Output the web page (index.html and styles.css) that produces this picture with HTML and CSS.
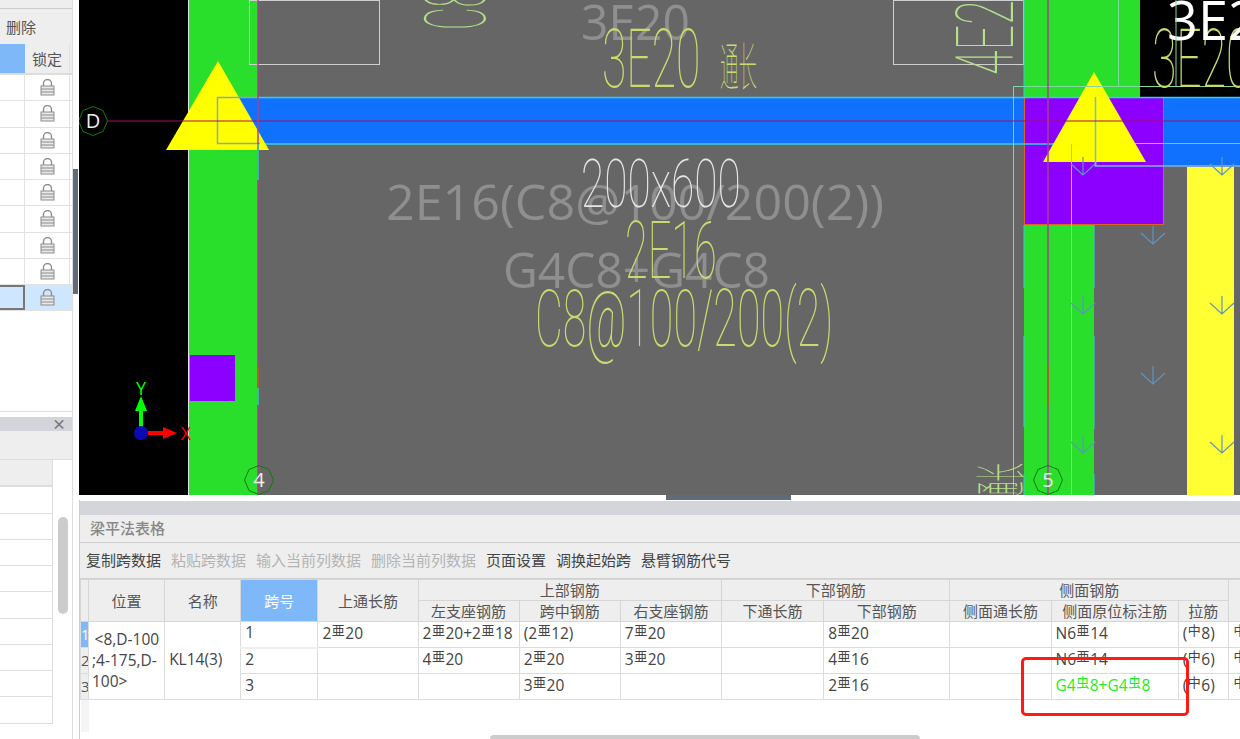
FILE: index.html
```html
<!DOCTYPE html>
<html lang="zh-CN">
<head>
    <meta charset="UTF-8">
    <meta name="viewport" content="width=device-width, initial-scale=1.0">
    <title>梁平法表格</title>
    <link rel="stylesheet" href="styles.css">
</head>
<body>
    <svg width="0" height="0" class="defs">
        <defs>
            <g id="lock">
                <path d="M3.5 7V4.500a4 4 0 0 1 8 0V7" fill="none" stroke="#8c8c8c" stroke-width="1.4"/>
                <rect x="1" y="7" width="13" height="9" fill="#e8e8e8" stroke="#8c8c8c"/>
                <path d="M1 10h13M1 13h13" stroke="#8c8c8c"/>
            </g>
            <path id="chev" d="M0 0V17M-12 7L0 18L12 7" fill="none" stroke="#5f95bd" stroke-width="1.2"/>
        </defs>
    </svg>

    <div class="page">
        <!-- Left side: layer list and lower panel -->
        <aside class="side">
            <div class="side-top"></div>
            <div class="side-tools">删除</div>
            <div class="lock-row lock-head"><span class="cell-a"></span><span class="cell-b">锁定</span><span class="cell-c"></span></div>
            <div class="lock-row"><span class="cell-a"></span><span class="cell-b"><svg width="15" height="17"><use href="#lock"/></svg></span><span class="cell-c"></span></div>
            <div class="lock-row"><span class="cell-a"></span><span class="cell-b"><svg width="15" height="17"><use href="#lock"/></svg></span><span class="cell-c"></span></div>
            <div class="lock-row"><span class="cell-a"></span><span class="cell-b"><svg width="15" height="17"><use href="#lock"/></svg></span><span class="cell-c"></span></div>
            <div class="lock-row"><span class="cell-a"></span><span class="cell-b"><svg width="15" height="17"><use href="#lock"/></svg></span><span class="cell-c"></span></div>
            <div class="lock-row"><span class="cell-a"></span><span class="cell-b"><svg width="15" height="17"><use href="#lock"/></svg></span><span class="cell-c"></span></div>
            <div class="lock-row"><span class="cell-a"></span><span class="cell-b"><svg width="15" height="17"><use href="#lock"/></svg></span><span class="cell-c"></span></div>
            <div class="lock-row"><span class="cell-a"></span><span class="cell-b"><svg width="15" height="17"><use href="#lock"/></svg></span><span class="cell-c"></span></div>
            <div class="lock-row"><span class="cell-a"></span><span class="cell-b"><svg width="15" height="17"><use href="#lock"/></svg></span><span class="cell-c"></span></div>
            <div class="lock-row selected"><span class="cell-a"></span><span class="cell-b"><svg width="15" height="17"><use href="#lock"/></svg></span><span class="cell-c"></span></div>
            <div class="side-fill"></div>

            <div class="side-panel">
                <div class="panel-title">×</div>
                <div class="panel-strip"></div>
                <div class="list">
                    <div class="list-head"></div>
                    <div class="list-row"></div>
                    <div class="list-row"></div>
                    <div class="list-row"></div>
                    <div class="list-row"></div>
                    <div class="list-row"></div>
                    <div class="list-row"></div>
                    <div class="list-row"></div>
                    <div class="list-row"></div>
                    <div class="list-row"></div>
                    <div class="list-thumb"></div>
                </div>
            </div>
        </aside>

        <div class="splitter-v"><span class="grip-v"></span></div>

        <main class="main">
            <!-- CAD view, coordinates are page pixels -->
            <svg class="cad" width="1161" height="495" viewBox="79 0 1161 495">
                <rect x="79" y="0" width="1161" height="495" fill="#000"/>
                <rect x="258" y="0" width="982" height="495" fill="#666"/>
                <rect x="1140" y="0" width="100" height="97" fill="#000"/>
                <rect x="189" y="0" width="69" height="495" fill="#2ade2c"/>
                <rect x="1024" y="0" width="116" height="97" fill="#2ade2c"/>
                <rect x="1024" y="225" width="70" height="270" fill="#2ade2c"/>
                <rect x="1187" y="167" width="47" height="328" fill="#ffff33"/>
                <rect x="190" y="355" width="45" height="46" fill="#8b00ff"/>
                <path d="M188.500 0V495" stroke="#e6e6e6"/>

                <!-- faded labels -->
                <text class="label" x="581" y="40" textLength="109" lengthAdjust="spacingAndGlyphs">3E20</text>
                <text class="label" x="386" y="220" textLength="498" lengthAdjust="spacingAndGlyphs">2E16(C8@100/200(2))</text>
                <text class="label" x="503" y="288" textLength="267" lengthAdjust="spacingAndGlyphs">G4C8+G4C8</text>

                <!-- beam -->
                <rect x="217" y="97" width="1023" height="47" fill="#1071ff"/>
                <rect x="1095" y="144" width="145" height="22" fill="#1071ff"/>
                <rect x="1024.500" y="97.500" width="139" height="127" fill="#8b00ff" stroke="#d9651f"/>
                <path d="M258 97.500H1240M258 144H1072" stroke="#35cfe8" stroke-width="1.500"/>
                <path d="M1072 143.500H1240" stroke="#5fd6c0"/>
                <path d="M1095.500 97V166H1240" fill="none" stroke="#7fb2f0" stroke-width="1.500"/>
                <polygon points="218,61 166,150 269,150" fill="#ff0"/>
                <polygon points="1094,72 1043,162 1146,162" fill="#ff0"/>
                <path d="M260 97.500H217.500V143.500H260" fill="none" stroke="#8fa6b8" stroke-width="1.500"/>
                <path d="M1095.500 97V166" stroke="#7fb2f0" stroke-width="1.500"/>

                <!-- outlines and axis lines -->
                <rect x="249.500" y="0.500" width="130" height="64" fill="none" stroke="#d0d0d0"/>
                <rect x="893.500" y="0.500" width="130" height="64" fill="none" stroke="#d0d0d0"/>
                <path d="M1013.500 495V86.500H1240M1118.500 0V86M1071.500 144V495" fill="none" stroke="#7fd8a0"/>
                <path d="M108 121H1240" stroke="#a0106a"/>
                <path d="M258 0V495M1048 0V495" stroke="#a8408a" stroke-width="1.500"/>
                <path d="M1024 0V97M1024 225V288M1024 336V427M1024 474V495M1094 225V288M1094 336V429M1094 474V495" stroke="#30d0d0"/>
                <path d="M258 144V180M258 388V405" stroke="#30d0b0" stroke-width="1.500"/>
                <path d="M258 366V388M1048 366V405" stroke="#c05a20" stroke-width="1.500"/>

                <use href="#chev" x="1083" y="157"/>
                <use href="#chev" x="1222" y="157"/>
                <use href="#chev" x="1153" y="226"/>
                <use href="#chev" x="1083" y="296"/>
                <use href="#chev" x="1222" y="296"/>
                <use href="#chev" x="1153" y="366"/>
                <use href="#chev" x="1083" y="435"/>
                <use href="#chev" x="1222" y="435"/>

                <!-- drawn rebar notes -->
                <text class="note" transform="translate(602 87) scale(.89 1.63)">3E20</text>
                <text class="note note-cn" transform="translate(720 86) scale(.46 1.3)">通长</text>
                <text class="note note-white" transform="translate(581 207) scale(.85 1.32)">200x600</text>
                <text class="note" transform="translate(625 278) scale(.83 1.58)">2E16</text>
                <text class="note" transform="translate(535 346) scale(.86 1.58)">C8@100/200(2)</text>
                <text class="note note-green" transform="translate(485 30) rotate(-90) scale(.7 1.7)">C8</text>
                <text class="note note-green" transform="translate(1013 75) rotate(-90) scale(.9 1.58)">4E2</text>
                <text class="note" transform="translate(1152 87) scale(.89 1.63)">3E20</text>
                <text class="note note-green note-cn" transform="translate(1020 500) rotate(-90) scale(.46 1.3)">通长</text>
                <text class="big-white" x="1167" y="40">3E2</text>
                <path d="M1176 0V87" stroke="#7fd8a0"/>

                <!-- axis bubbles -->
                <polygon class="bubble" points="93,106.500 103,110.500 107.500,121 103,131.500 93,135.500 83,131.500 78.500,121 83,110.500"/>
                <polygon class="bubble" points="259,465.500 269,469.500 273.500,480 269,490.500 259,494.500 249,490.500 244.500,480 249,469.500"/>
                <polygon class="bubble" points="1048,465.500 1058,469.500 1062.500,480 1058,490.500 1048,494.500 1038,490.500 1033.500,480 1038,469.500"/>
                <text class="bubble-text" x="93" y="128">D</text>
                <text class="bubble-text" x="259" y="487">4</text>
                <text class="bubble-text" x="1048" y="487">5</text>

                <!-- coordinate marker -->
                <path d="M141 433V405" stroke="#0f0" stroke-width="4"/>
                <polygon points="141,396 135,411 147,411" fill="#0f0"/>
                <path d="M141 433H165" stroke="#f00" stroke-width="4"/>
                <polygon points="177,433 163,427 163,439" fill="#f00"/>
                <circle cx="141" cy="433" r="7" fill="#0a0ab4"/>
                <text class="axis axis-y" x="141" y="395">Y</text>
                <text class="axis axis-x" x="186" y="440">X</text>
            </svg>

            <div class="splitter-h"><span class="grip-h"></span></div>

            <section class="beam-panel">
                <div class="beam-top"></div>
                <div class="beam-title">梁平法表格</div>
                <div class="beam-tools">
                    <span>复制跨数据</span>
                    <span class="off">粘贴跨数据</span>
                    <span class="off">输入当前列数据</span>
                    <span class="off">删除当前列数据</span>
                    <span>页面设置</span>
                    <span>调换起始跨</span>
                    <span>悬臂钢筋代号</span>
                </div>
                <div class="table-wrap">
                    <table class="beam-table">
                        <colgroup>
                            <col class="c-gut"><col class="c-76"><col class="c-76"><col class="c-77">
                            <col class="c-100"><col class="c-101"><col class="c-101"><col class="c-101"><col class="c-102">
                            <col class="c-126"><col class="c-101"><col class="c-127"><col class="c-50"><col class="c-rest">
                        </colgroup>
                        <thead>
                            <tr class="head-1">
                                <th class="gut" rowspan="2"></th>
                                <th rowspan="2">位置</th>
                                <th rowspan="2">名称</th>
                                <th rowspan="2" class="active">跨号</th>
                                <th rowspan="2">上通长筋</th>
                                <th colspan="3">上部钢筋</th>
                                <th colspan="2">下部钢筋</th>
                                <th colspan="3">侧面钢筋</th>
                                <th rowspan="2"></th>
                            </tr>
                            <tr class="head-2">
                                <th>左支座钢筋</th>
                                <th>跨中钢筋</th>
                                <th>右支座钢筋</th>
                                <th>下通长筋</th>
                                <th>下部钢筋</th>
                                <th>侧面通长筋</th>
                                <th>侧面原位标注筋</th>
                                <th>拉筋</th>
                            </tr>
                        </thead>
                        <tbody>
                            <tr>
                                <td class="gut gut-on">1</td>
                                <td rowspan="3" class="pos">&#8201;&lt;8,D-100<br>;4-175,D-<br>100&gt;</td>
                                <td rowspan="3">KL14(3)</td>
                                <td class="current">1</td>
                                <td>2<i>亜</i>20</td>
                                <td>2<i>亜</i>20+2<i>亜</i>18</td>
                                <td>(2<i>亜</i>12)</td>
                                <td>7<i>亜</i>20</td>
                                <td></td>
                                <td>8<i>亜</i>20</td>
                                <td></td>
                                <td>N6<i>亜</i>14</td>
                                <td>(<i>中</i>8)</td>
                                <td><i>中</i></td>
                            </tr>
                            <tr>
                                <td class="gut">2</td>
                                <td>2</td>
                                <td></td>
                                <td>4<i>亜</i>20</td>
                                <td>2<i>亜</i>20</td>
                                <td>3<i>亜</i>20</td>
                                <td></td>
                                <td>4<i>亜</i>16</td>
                                <td></td>
                                <td>N6<i>亜</i>14</td>
                                <td>(<i>中</i>6)</td>
                                <td><i>中</i></td>
                            </tr>
                            <tr>
                                <td class="gut">3</td>
                                <td>3</td>
                                <td></td>
                                <td></td>
                                <td>3<i>亜</i>20</td>
                                <td></td>
                                <td></td>
                                <td>2<i>亜</i>16</td>
                                <td></td>
                                <td class="changed">G4<i>虫</i>8+G4<i>虫</i>8</td>
                                <td>(<i>中</i>6)</td>
                                <td><i>中</i></td>
                            </tr>
                            <tr class="blank">
                                <td class="gut"></td>
                            </tr>
                        </tbody>
                    </table>
                    <div class="red-box"></div>
                </div>
                <div class="h-scroll"></div>
            </section>
        </main>
    </div>
</body>
</html>
```

FILE: styles.css
```css
html, body {
    margin: 0;
    padding: 0;
    overflow: hidden;
}

body {
    width: 1240px;
    height: 739px;
    background-color: #fff;
    font-family: "Noto Sans CJK SC", "Open Sans", sans-serif;
    font-size: 15px;
    color: #444;
}

.defs {
    display: block;
    height: 0;
}

.page {
    display: flex;
    height: 739px;
}

/* left side */
.side {
    width: 73px;
    height: 739px;
    border-right: 1px solid #ddd;
    box-sizing: border-box;
    display: flex;
    flex-direction: column;
    flex-shrink: 0;
}

.side-top {
    height: 8px;
    background-color: #eee;
    border-bottom: 1px solid #ccc;
}

.side-tools {
    height: 35px;
    line-height: 36px;
    padding-left: 6px;
    background-color: #eee;
    color: #555;
}

.lock-row {
    display: flex;
    height: 26.250px;
    border-bottom: 1px solid #e2e2e2;
    box-sizing: border-box;
}

.lock-head {
    height: 31px;
    background-color: #eee;
    border-bottom: 2px solid #ddd;
}

.cell-a {
    width: 24px;
    border-right: 1px solid #e2e2e2;
}

.lock-head .cell-a {
    background-color: #7eb8f8;
    border-right: 0;
    width: 25px;
}

.cell-b {
    width: 44px;
    display: flex;
    align-items: center;
    justify-content: center;
    border-right: 1px solid #e2e2e2;
}

.lock-head .cell-b {
    color: #555;
}

.selected {
    background-color: #cfe6ff;
}

.selected .cell-a {
    border: 2px solid #777;
    border-left: 0;
    box-sizing: border-box;
    width: 25px;
}

.side-fill {
    height: 100px;
    border-bottom: 1px solid #ddd;
}

.side-panel {
    flex: 1;
    margin-top: 5px;
}

.panel-title {
    height: 14px;
    line-height: 13px;
    padding-right: 6px;
    background-color: #d3d5da;
    text-align: right;
    font-size: 14px;
    font-weight: bold;
    color: #777;
}

.panel-strip {
    height: 28px;
    background-color: #eee;
    border-bottom: 1px solid #ddd;
}

.list {
    position: relative;
}

.list-head {
    width: 52px;
    height: 25px;
    background-color: #eee;
    border-right: 1px solid #ddd;
    border-bottom: 2px solid #ddd;
}

.list-row {
    width: 52px;
    height: 25.250px;
    border-right: 1px solid #ddd;
    border-bottom: 1px solid #ddd;
}

.list-thumb {
    position: absolute;
    left: 58px;
    top: 57px;
    width: 10px;
    height: 97px;
    border-radius: 5px;
    background-color: #ccc;
}

.splitter-v {
    width: 6px;
    flex-shrink: 0;
    position: relative;
}

.grip-v {
    position: absolute;
    left: 0;
    top: 169px;
    width: 5px;
    height: 125px;
    background-color: #5f6b78;
}

/* main column */
.main {
    width: 1161px;
    flex-shrink: 0;
}

.cad {
    display: block;
}

.label {
    font-family: "Open Sans", sans-serif;
    font-size: 50px;
    fill: #8f8f8f;
}

.note {
    font-family: Roboto, sans-serif;
    font-weight: 100;
    font-size: 50px;
    fill: #c8dc6e;
}

.note-cn {
    font-family: "Noto Sans CJK SC", sans-serif;
    font-size: 40px;
}

.note-white {
    fill: #e6e6e6;
}

.note-green {
    fill: #b5e08a;
}

.big-white {
    font-family: "Open Sans", sans-serif;
    font-size: 54px;
    fill: #fff;
}

.bubble {
    fill: none;
    stroke: #0f7a0f;
}

.bubble-text {
    font-family: "Open Sans", sans-serif;
    font-size: 20px;
    fill: #eee;
    text-anchor: middle;
}

.axis {
    font-family: "Open Sans", sans-serif;
    font-size: 18px;
    text-anchor: middle;
}

.axis-y {
    fill: #0f0;
}

.axis-x {
    fill: #f00;
}

.splitter-h {
    height: 5px;
    position: relative;
}

.grip-h {
    position: absolute;
    left: 587px;
    top: 0;
    width: 125px;
    height: 5px;
    background-color: #5f6b78;
}

/* beam table panel */
.beam-panel {
    position: relative;
    height: 239px;
    overflow: hidden;
    border-left: 1px solid #ccc;
    box-sizing: border-box;
}

.beam-top {
    height: 14px;
    margin-top: 1px;
    background-color: #d3d5da;
}

.beam-title {
    height: 27px;
    line-height: 25px;
    padding-left: 10px;
    background-color: #eee;
    border-bottom: 1px solid #d0d0d0;
    font-weight: 500;
    color: #888;
}

.beam-tools {
    display: flex;
    gap: 10px;
    height: 35px;
    line-height: 33px;
    padding-left: 6px;
    background-color: #eee;
    border-bottom: 1px solid #d0d0d0;
    color: #444;
}

.beam-tools .off {
    color: #b4b4b4;
}

.table-wrap {
    position: relative;
}

.beam-table {
    table-layout: fixed;
    width: 1169px;
    border-collapse: collapse;
    color: #444;
}

.c-gut { width: 8px; }
.c-76 { width: 76px; }
.c-77 { width: 77px; }
.c-100 { width: 100px; }
.c-101 { width: 101px; }
.c-102 { width: 102px; }
.c-126 { width: 126px; }
.c-127 { width: 127px; }
.c-50 { width: 50px; }
.c-rest { width: 20px; }

.beam-table th {
    background-color: #eee;
    border: 1px solid #d6d6d6;
    font-weight: normal;
    font-size: 15px;
    line-height: 18px;
    color: #555;
    padding: 0;
    overflow: hidden;
    white-space: nowrap;
}

.head-1 {
    height: 21px;
}

.head-2 {
    height: 21px;
}

.beam-table th.active {
    background-color: #7eb8f8;
    color: #fff;
}

.beam-table tbody tr {
    height: 26px;
}

.beam-table td {
    border: 1px solid #dcdcdc;
    padding: 0 0 3px 4px;
    font-family: "Open Sans", "Noto Sans CJK SC", sans-serif;
    font-size: 15.500px;
    line-height: 21px;
    color: #444;
    white-space: nowrap;
    overflow: hidden;
}

.beam-table td.gut {
    padding: 0;
    background-color: #eee;
    color: #555;
    font-size: 15px;
    text-align: center;
}

.beam-table td.gut-on {
    background-color: #7eb8f8;
    color: #fff;
}

.beam-table td.pos {
    line-height: 21px;
    padding: 0 0 0 3px;
    overflow: visible;
}

.beam-table td.current {
    border-bottom: 2px solid #eee;
}

.beam-table td.changed {
    color: #20f020;
}

.beam-table i {
    font-family: "Noto Sans CJK JP", sans-serif;
    font-style: normal;
    font-size: 13px;
    line-height: 12px;
    vertical-align: 4px;
    margin: 0 .5px;
}

.beam-table tr.blank {
    height: 32px;
}

.beam-table tr.blank td {
    border: 0;
    background-color: #f4f4f4;
}

.red-box {
    position: absolute;
    left: 941px;
    top: 78px;
    width: 162px;
    height: 53px;
    border: 3.500px solid #ff1a12;
    border-radius: 5px;
}

.h-scroll {
    position: absolute;
    left: 410px;
    bottom: 0;
    width: 430px;
    height: 4px;
    border-radius: 4px 4px 0 0;
    background-color: #ccc;
}
```
